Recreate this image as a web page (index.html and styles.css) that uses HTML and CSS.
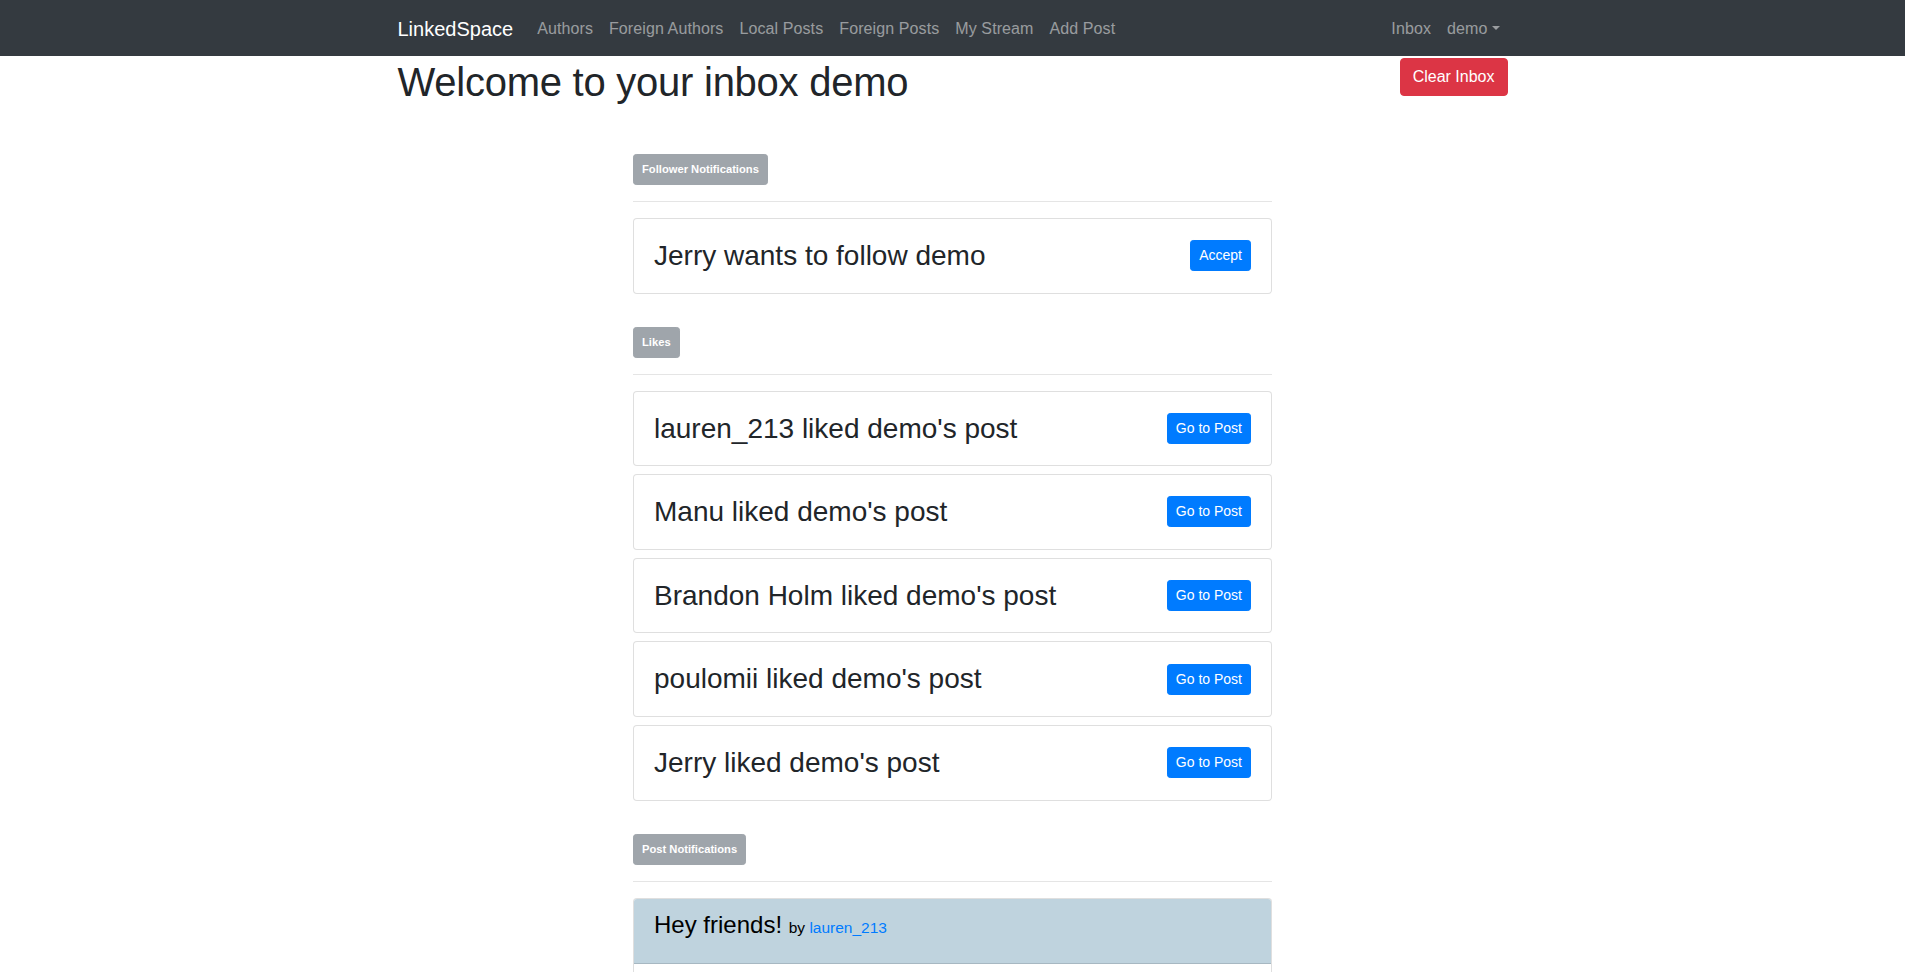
FILE: index.html
```html
<!DOCTYPE html>
<html lang="en">
<head>
<meta charset="utf-8">
<title>LinkedSpace - Inbox</title>
<link rel="stylesheet" href="styles.css">
</head>
<body>
<nav class="navbar">
  <div class="container nav-inner">
    <a class="brand" href="#">LinkedSpace</a>
    <ul class="nav-links">
      <li><a class="nav-link" href="#">Authors</a></li>
      <li><a class="nav-link" href="#">Foreign Authors</a></li>
      <li><a class="nav-link" href="#">Local Posts</a></li>
      <li><a class="nav-link" href="#">Foreign Posts</a></li>
      <li><a class="nav-link" href="#">My Stream</a></li>
      <li><a class="nav-link" href="#">Add Post</a></li>
    </ul>
    <ul class="nav-links nav-right">
      <li><a class="nav-link" href="#">Inbox</a></li>
      <li><a class="nav-link dropdown-toggle" href="#">demo</a></li>
    </ul>
  </div>
</nav>

<main class="container">
  <div class="page-head">
    <h1 class="page-title">Welcome to your inbox demo</h1>
    <button class="btn btn-danger clear-btn">Clear Inbox</button>
  </div>

  <div class="inbox">
    <section class="section section-first">
      <button class="btn btn-sm tag" disabled>Follower Notifications</button>
      <hr class="divider">
      <div class="card">
        <div class="card-body row-card">
          <h3 class="card-title">Jerry wants to follow demo</h3>
          <button class="btn btn-sm btn-primary">Accept</button>
        </div>
      </div>
    </section>

    <section class="section">
      <button class="btn btn-sm tag" disabled>Likes</button>
      <hr class="divider">
      <div class="card">
        <div class="card-body row-card">
          <h3 class="card-title">lauren_213 liked demo's post</h3>
          <button class="btn btn-sm btn-primary">Go to Post</button>
        </div>
      </div>
      <div class="card">
        <div class="card-body row-card">
          <h3 class="card-title">Manu liked demo's post</h3>
          <button class="btn btn-sm btn-primary">Go to Post</button>
        </div>
      </div>
      <div class="card">
        <div class="card-body row-card">
          <h3 class="card-title">Brandon Holm liked demo's post</h3>
          <button class="btn btn-sm btn-primary">Go to Post</button>
        </div>
      </div>
      <div class="card">
        <div class="card-body row-card">
          <h3 class="card-title">poulomii liked demo's post</h3>
          <button class="btn btn-sm btn-primary">Go to Post</button>
        </div>
      </div>
      <div class="card">
        <div class="card-body row-card">
          <h3 class="card-title">Jerry liked demo's post</h3>
          <button class="btn btn-sm btn-primary">Go to Post</button>
        </div>
      </div>
    </section>

    <section class="section">
      <button class="btn btn-sm tag" disabled>Post Notifications</button>
      <hr class="divider">
      <div class="card post-card">
        <div class="card-header post-header">
          <h4 class="post-title">Hey friends! <small class="post-by">by <a href="#" class="author-link">lauren_213</a></small></h4>
        </div>
        <div class="card-body post-body"></div>
      </div>
    </section>
  </div>
</main>
</body>
</html>
```

FILE: styles.css
```css
* {
  box-sizing: border-box;
}

html, body {
  margin: 0;
  padding: 0;
}

body {
  font-family: "Liberation Sans", Arial, sans-serif;
  font-size: 16px;
  line-height: 1.5;
  color: #212529;
  background: #fff;
}

a {
  text-decoration: none;
}

.container {
  width: 1140px;
  margin: 0 auto;
  padding: 0 15px;
}

/* Navbar */
.navbar {
  background: #343a40;
  height: 56px;
  padding: 9px 0 7px;
}

.nav-inner {
  display: flex;
  align-items: center;
  height: 40px;
}

.brand {
  color: #fff;
  font-size: 20px;
  line-height: 30px;
  padding: 5px 0;
  margin-right: 16px;
  white-space: nowrap;
}

.nav-links {
  list-style: none;
  margin: 0;
  padding: 0;
  display: flex;
}

.nav-right {
  margin-left: auto;
}

.nav-link {
  display: block;
  padding: 8px;
  color: rgba(255, 255, 255, 0.5);
  line-height: 24px;
  letter-spacing: 0.1px;
}

.dropdown-toggle::after {
  content: "";
  display: inline-block;
  margin-left: 0.255em;
  vertical-align: 0.255em;
  border-top: 0.3em solid;
  border-right: 0.3em solid transparent;
  border-left: 0.3em solid transparent;
  border-bottom: 0;
}

/* Page head */
.page-head {
  display: flex;
  justify-content: space-between;
  align-items: flex-start;
}

.page-title {
  margin: 2px 0 6px;
  font-size: 40px;
  font-weight: 500;
  line-height: 1.2;
  letter-spacing: -0.25px;
}

.clear-btn {
  margin-top: 2px;
}

/* Buttons */
.btn {
  display: inline-block;
  font-family: inherit;
  font-weight: 400;
  text-align: center;
  border: 1px solid transparent;
  padding: 6px 12px;
  font-size: 16px;
  line-height: 24px;
  border-radius: 4px;
  cursor: pointer;
  white-space: nowrap;
}

.btn-sm {
  padding: 4px 8px;
  font-size: 14px;
  line-height: 21px;
  border-radius: 3.2px;
}

.btn-danger {
  color: #fff;
  background: #dc3545;
  border-color: #dc3545;
}

.btn-primary {
  color: #fff;
  background: #007bff;
  border-color: #007bff;
}

.tag {
  color: #fff;
  background: #9fa5ab;
  border-color: #9fa5ab;
  font-size: 11.2px;
  font-weight: 700;
  cursor: default;
}

/* Inbox column */
.inbox {
  width: 639px;
  margin: 0 auto;
}

.section {
  margin-top: 33px;
}

.section-first {
  margin-top: 42px;
}

.divider {
  margin: 16px 0;
  border: 0;
  border-top: 1px solid rgba(0, 0, 0, 0.1);
  height: 0;
}

.card {
  border: 1px solid rgba(0, 0, 0, 0.125);
  border-radius: 4px;
  background: #fff;
  margin-bottom: 8px;
  overflow: hidden;
}

.card-body {
  padding: 20px;
}

.row-card {
  display: flex;
  justify-content: space-between;
  align-items: center;
}

.card-title {
  margin: 0;
  font-size: 28px;
  font-weight: 500;
  line-height: 1.2;
}

/* Post card */
.post-header {
  background: #bfd3de;
  padding: 12px 20px;
  border-bottom: 1px solid rgba(0, 0, 0, 0.125);
}

.post-title {
  margin: 0 0 12px;
  font-size: 24px;
  font-weight: 500;
  line-height: 1.2;
  color: #000;
}

.post-by {
  font-size: 15.5px;
  font-weight: 400;
}

.author-link {
  color: #007bff;
}

.post-body {
  min-height: 120px;
}
```
